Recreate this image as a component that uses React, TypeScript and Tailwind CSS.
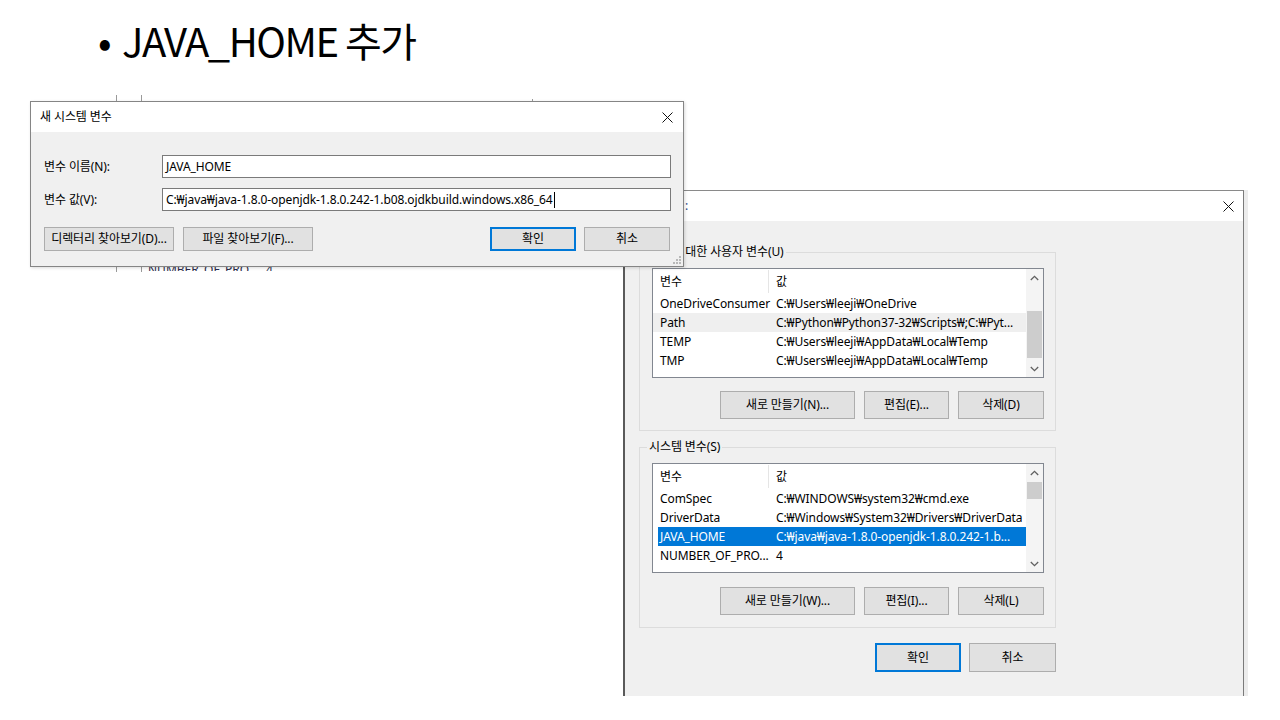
import React from "react";

function CloseX() {
  return (
    <svg width="11" height="11" viewBox="0 0 11 11" className="block">
      <path d="M0.5 0.5L10.5 10.5M10.5 0.5L0.5 10.5" stroke="#111" strokeWidth="1" fill="none" />
    </svg>
  );
}

function Chevron({ up }: { up?: boolean }) {
  return (
    <svg width="9" height="6" viewBox="0 0 9 6" className="block">
      <path d={up ? "M0.8 5L4.5 1.3L8.2 5" : "M0.8 1L4.5 4.7L8.2 1"} stroke="#606060" strokeWidth="1.3" fill="none" />
    </svg>
  );
}

function Grip() {
  return (
    <svg width="9" height="9" viewBox="0 0 9 9" className="block">
      <rect x="7" y="1" width="2" height="2" fill="#b8b8b8" />
      <rect x="4" y="4" width="2" height="2" fill="#b8b8b8" />
      <rect x="7" y="4" width="2" height="2" fill="#b8b8b8" />
      <rect x="1" y="7" width="2" height="2" fill="#b8b8b8" />
      <rect x="4" y="7" width="2" height="2" fill="#b8b8b8" />
      <rect x="7" y="7" width="2" height="2" fill="#b8b8b8" />
    </svg>
  );
}

function Btn({
  children,
  w,
  h,
  primary,
}: {
  children: React.ReactNode;
  w: string;
  h: string;
  primary?: boolean;
}) {
  return (
    <div
      className={`${w} ${h} flex items-center justify-center bg-[#e1e1e1] whitespace-nowrap ${
        primary ? "border-2 border-[#0078d7]" : "border border-[#adadad]"
      }`}
    >
      {children}
    </div>
  );
}

type Row = { name: string; value: string; hover?: boolean; selected?: boolean };

function ListView({ rows, thumbTop, thumbH }: { rows: Row[]; thumbTop: string; thumbH: string }) {
  return (
    <div className="flex h-[110px] w-[392px] border border-[#828790] bg-white overflow-hidden">
      <div className="flex-1 flex flex-col overflow-hidden">
        <div className="flex h-[25px] shrink-0 items-center">
          <div className="w-[116px] h-[23px] pl-[7px] flex items-center border-r border-[#e5e5e5]">변수</div>
          <div className="pl-[7px]">값</div>
        </div>
        {rows.map((r) => (
          <div
            key={r.name}
            className={`relative flex h-[19px] shrink-0 items-center whitespace-nowrap ${
              r.hover ? "bg-[#efefef]" : ""
            } ${r.selected ? "text-white" : ""}`}
          >
            {r.selected && <div className="absolute left-[5px] right-0 top-0 bottom-0 bg-[#0078d7]" />}
            <div className="relative w-[116px] shrink-0 pl-[7px]">{r.name}</div>
            <div className="relative pl-[7px] overflow-hidden">{r.value}</div>
          </div>
        ))}
      </div>
      <div className="w-[17px] shrink-0 flex flex-col bg-[#f4f4f4]">
        <div className="h-[17px] flex items-center justify-center shrink-0">
          <Chevron up />
        </div>
        <div className="flex-1 relative">
          <div className={`absolute left-[1px] right-[1px] ${thumbTop} ${thumbH} bg-[#cdcdcd]`} />
        </div>
        <div className="h-[17px] flex items-center justify-center shrink-0">
          <Chevron />
        </div>
      </div>
    </div>
  );
}

function GroupBox({
  label,
  h,
  children,
}: {
  label: string;
  h: string;
  children: React.ReactNode;
}) {
  return (
    <div className={`relative w-[417px] ${h} border border-[#dcdcdc] flex flex-col pt-[15px] pl-[12px] pr-[11px]`}>
      <div className="absolute left-[7px] top-[-10px] px-[2px] bg-[#f0f0f0] leading-[18px]">{label}</div>
      {children}
    </div>
  );
}

export default function App() {
  const userRows: Row[] = [
    { name: "OneDriveConsumer", value: "C:₩Users₩leeji₩OneDrive" },
    { name: "Path", value: "C:₩Python₩Python37-32₩Scripts₩;C:₩Pyt...", hover: true },
    { name: "TEMP", value: "C:₩Users₩leeji₩AppData₩Local₩Temp" },
    { name: "TMP", value: "C:₩Users₩leeji₩AppData₩Local₩Temp" },
  ];
  const sysRows: Row[] = [
    { name: "ComSpec", value: "C:₩WINDOWS₩system32₩cmd.exe" },
    { name: "DriverData", value: "C:₩Windows₩System32₩Drivers₩DriverData" },
    { name: "JAVA_HOME", value: "C:₩java₩java-1.8.0-openjdk-1.8.0.242-1.b...", selected: true },
    { name: "NUMBER_OF_PRO...", value: "4" },
  ];

  return (
    <div className="relative w-[1280px] h-[720px] overflow-hidden bg-white text-black font-['Noto_Sans','Noto_Sans_CJK_KR',sans-serif]">
      {/* slide title */}
      <div className="absolute left-[98px] top-[12px] flex items-center text-[40px] leading-[56px] font-['Noto_Sans_CJK_KR',sans-serif] tracking-[-1.5px]">
        <span className="w-[24px]">•</span>
        <span>JAVA_HOME 추가</span>
      </div>

      {/* remnants of a window behind the small dialog */}
      <div className="absolute left-[116px] top-[95px] w-px h-[6px] bg-[#9a9a9a]" />
      <div className="absolute left-[141px] top-[95px] w-px h-[6px] bg-[#9a9a9a]" />
      <div className="absolute left-[532px] top-[99px] w-px h-[2px] bg-[#9a9a9a]" />
      <div className="absolute left-[116px] top-[266px] w-px h-[6px] bg-[#9a9a9a]" />
      <div className="absolute left-[141px] top-[266px] w-px h-[6px] bg-[#9a9a9a]" />
      <div className="absolute left-[148px] top-[267px] w-[140px] h-[4px] overflow-hidden">
        <div className="relative top-[-5px] flex text-[12px] leading-[16px] text-[#2a2a4a] whitespace-nowrap">
          <span className="w-[118px]">NUMBER_OF_PRO...</span>
          <span>4</span>
        </div>
      </div>

      {/* large environment variables dialog */}
      <div className="absolute left-[623px] top-[190px] w-[625px] h-[506px] flex tracking-[-0.1px]">
        <div className="w-[621px] flex flex-col border-l-2 border-l-[#5a5a5a] border-t border-t-[#8a8a8a] border-r border-r-[#7a7a7a] bg-[#f0f0f0] text-[12px]">
          <div className="relative h-[30px] shrink-0 bg-white flex items-center justify-end pr-[9px]">
            <span className="absolute left-[60px] top-[6px] text-[#2b4b8a]">:</span>
            <CloseX />
          </div>
          <div className="flex flex-col pl-[14px] pt-[31px]">
            <GroupBox label="leeji에 대한 사용자 변수(U)" h="h-[179px]">
              <ListView rows={userRows} thumbTop="top-[25px]" thumbH="h-[47px]" />
              <div className="mt-[13px] flex justify-end gap-[9px]">
                <Btn w="w-[135px]" h="h-[28px]">새로 만들기(N)...</Btn>
                <Btn w="w-[85px]" h="h-[28px]">편집(E)...</Btn>
                <Btn w="w-[86px]" h="h-[28px]">삭제(D)</Btn>
              </div>
            </GroupBox>
            <div className="mt-[16px]">
              <GroupBox label="시스템 변수(S)" h="h-[181px]">
                <ListView rows={sysRows} thumbTop="top-[1px]" thumbH="h-[17px]" />
                <div className="mt-[14px] flex justify-end gap-[9px]">
                  <Btn w="w-[135px]" h="h-[28px]">새로 만들기(W)...</Btn>
                  <Btn w="w-[85px]" h="h-[28px]">편집(I)...</Btn>
                  <Btn w="w-[86px]" h="h-[28px]">삭제(L)</Btn>
                </div>
              </GroupBox>
            </div>
            <div className="mt-[15px] w-[417px] flex justify-end gap-[8px]">
              <Btn w="w-[86px]" h="h-[29px]" primary>
                확인
              </Btn>
              <Btn w="w-[87px]" h="h-[29px]">취소</Btn>
            </div>
          </div>
        </div>
        <div className="w-[4px] bg-[#ececec]" />
      </div>

      {/* small new system variable dialog */}
      <div className="absolute left-[30px] top-[101px] w-[654px] h-[166px] flex flex-col border border-[#858585] bg-[#f0f0f0] text-[12px] tracking-[-0.1px] shadow-[1px_1px_3px_rgba(0,0,0,0.15)]">
        <div className="h-[30px] shrink-0 bg-white flex items-center justify-between pl-[9px] pr-[10px]">
          <span>새 시스템 변수</span>
          <CloseX />
        </div>
        <div className="relative flex-1 flex flex-col pl-[13px] pr-[12px] pt-[23px]">
          <div className="flex items-center">
            <div className="w-[118px]">변수 이름(N):</div>
            <div className="flex-1 h-[23px] border border-[#7a7a7a] bg-white flex items-center pl-[3px]">JAVA_HOME</div>
          </div>
          <div className="flex items-center mt-[10px]">
            <div className="w-[118px]">변수 값(V):</div>
            <div className="flex-1 h-[23px] border border-[#7a7a7a] bg-white flex items-center pl-[3px] whitespace-nowrap">
              <span>C:₩java₩java-1.8.0-openjdk-1.8.0.242-1.b08.ojdkbuild.windows.x86_64</span>
              <span className="w-px h-[16px] bg-black ml-[1px]" />
            </div>
          </div>
          <div className="flex justify-between mt-[16px] pr-[1px]">
            <div className="flex gap-[9px]">
              <Btn w="w-[130px]" h="h-[24px]">디렉터리 찾아보기(D)...</Btn>
              <Btn w="w-[130px]" h="h-[24px]">파일 찾아보기(F)...</Btn>
            </div>
            <div className="flex gap-[8px]">
              <Btn w="w-[86px]" h="h-[24px]" primary>
                확인
              </Btn>
              <Btn w="w-[86px]" h="h-[24px]">취소</Btn>
            </div>
          </div>
          <div className="absolute right-[2px] bottom-[2px]">
            <Grip />
          </div>
        </div>
      </div>
    </div>
  );
}
